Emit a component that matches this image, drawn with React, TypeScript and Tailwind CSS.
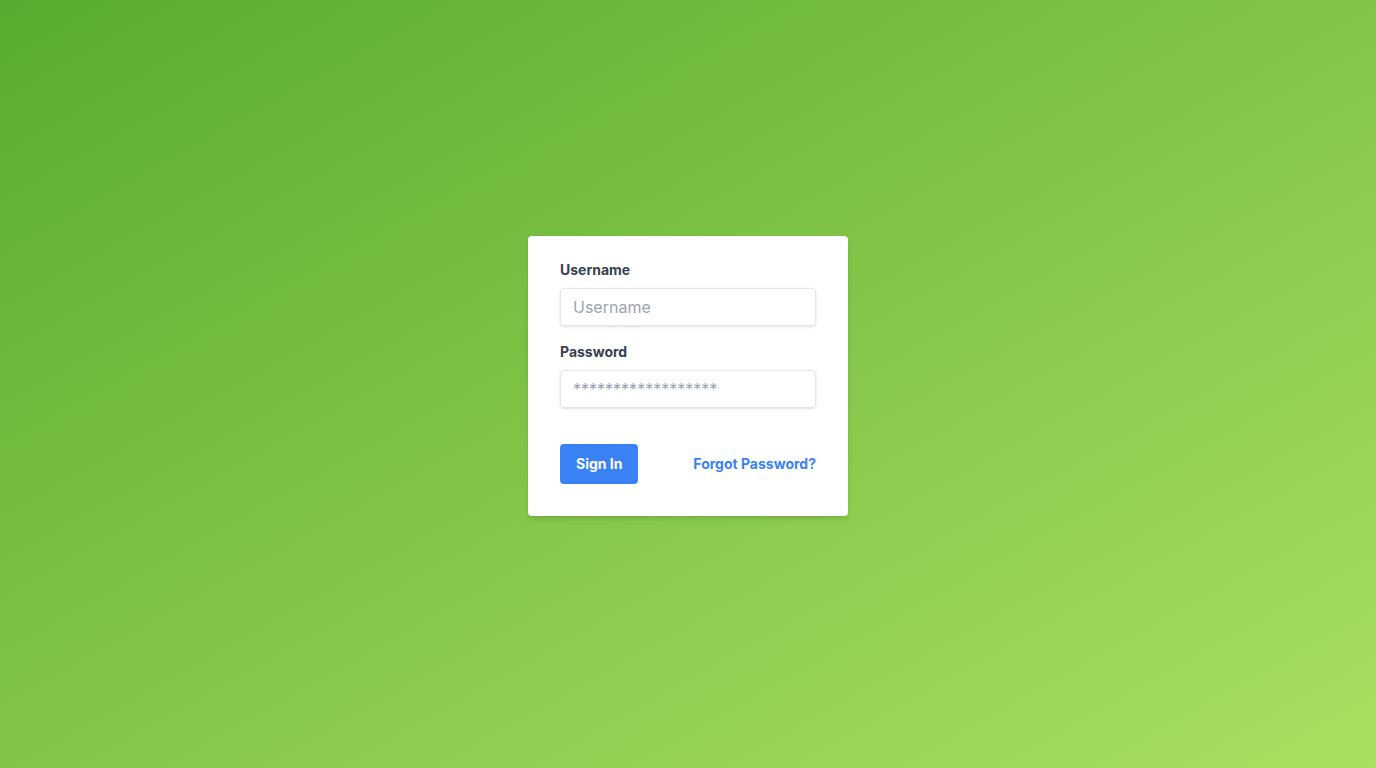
export default function App() {
  return (
    <div
      className="flex min-h-screen w-full items-center justify-center bg-gradient-to-br from-[#58ab30] to-[#a9e060]"
      style={{ fontFamily: "Inter, 'Noto Sans', sans-serif" }}
    >
      <div className="w-full max-w-xs">
        <form className="mb-4 rounded bg-white px-8 pt-6 pb-8 shadow-md">
          <div className="mb-4">
            <label
              className="mb-2 block text-sm font-bold text-[#374151]"
              htmlFor="username"
            >
              Username
            </label>
            <input
              id="username"
              type="text"
              placeholder="Username"
              className="w-full appearance-none rounded border border-[#e5e7eb] px-3 py-2 leading-tight text-[#374151] shadow-[0_1px_3px_0_rgba(0,0,0,0.1),0_1px_2px_-1px_rgba(0,0,0,0.1)] placeholder:text-[#9ca3af] focus:outline-none"
            />
          </div>
          <div className="mb-6">
            <label
              className="mb-2 block text-sm font-bold text-[#374151]"
              htmlFor="password"
            >
              Password
            </label>
            <input
              id="password"
              type="password"
              placeholder="******************"
              className="mb-3 w-full appearance-none rounded border border-[#e5e7eb] px-3 py-2 leading-tight text-[#374151] shadow-[0_1px_3px_0_rgba(0,0,0,0.1),0_1px_2px_-1px_rgba(0,0,0,0.1)] placeholder:text-[#9ca3af] focus:outline-none"
            />
          </div>
          <div className="flex items-center justify-between">
            <button
              type="button"
              className="rounded bg-[#3b82f6] px-4 py-2 text-sm/6 font-bold text-white hover:bg-[#2563eb]"
            >
              Sign In
            </button>
            <a
              href="#"
              className="inline-block align-baseline text-sm font-bold text-[#3b82f6] hover:text-[#1d4ed8]"
            >
              Forgot Password?
            </a>
          </div>
        </form>
      </div>
    </div>
  );
}
